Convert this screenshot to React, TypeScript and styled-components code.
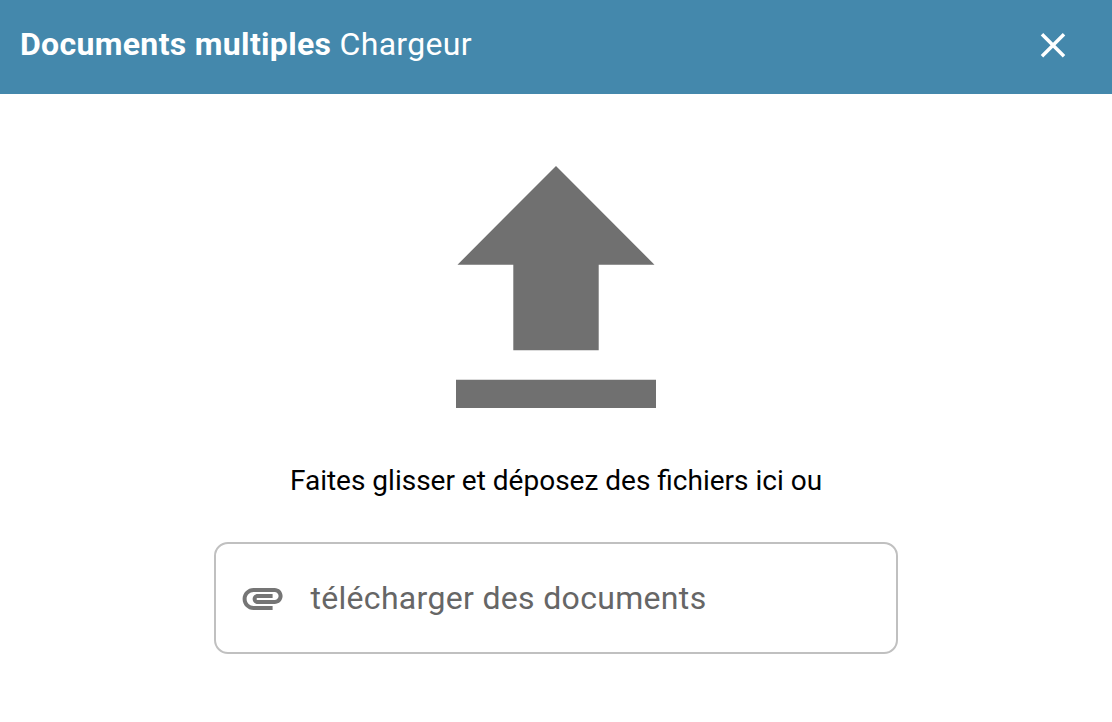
import React from "react";
import styled, { createGlobalStyle } from "styled-components";

const GlobalStyle = createGlobalStyle`
  * { box-sizing: border-box; }
  body { margin: 0; background: #fff; font-family: Roboto, sans-serif; }
`;

const Dialog = styled.div`
  height: 722px;
  overflow: hidden;
  background: #fff;
`;

const Header = styled.header`
  display: flex;
  justify-content: space-between;
  align-items: flex-start;
  height: 94px;
  padding: 24px 38px 0 20px;
  background: #4488ac;
  color: #fff;
`;

const Title = styled.h1`
  margin: 1px 0 0;
  font-size: 32px;
  line-height: 38px;
  font-weight: 400;
  letter-spacing: 0.01em;
  white-space: nowrap;
`;

const Strong = styled.b`
  font-weight: 700;
`;

const CloseButton = styled.button`
  display: flex;
  padding: 0;
  border: 0;
  background: none;
  color: inherit;
`;

const DropZone = styled.main`
  display: flex;
  flex-direction: column;
  align-items: center;
  padding-top: 72px;
`;

const Hint = styled.p`
  margin: 55px 0 0;
  font-size: 28px;
  line-height: 36px;
  color: #000;
  white-space: nowrap;
`;

const FileField = styled.label`
  display: flex;
  align-items: center;
  width: 684px;
  height: 112px;
  margin-top: 43px;
  padding-left: 22px;
  border: 2px solid #c0c0c0;
  border-radius: 14px;
`;

const FieldLabel = styled.span`
  margin-left: 24.4px;
  font-size: 32px;
  line-height: 38px;
  letter-spacing: 0.01em;
  color: #666;
  white-space: nowrap;
`;

export default function App() {
  return (
    <Dialog>
      <GlobalStyle />
      <Header>
        <Title><Strong>Documents multiples</Strong> Chargeur</Title>
        <CloseButton aria-label="Fermer">
          <svg width="42" height="42" viewBox="0 0 24 24" fill="currentColor">
            <path transform="translate(0 0.15)" d="M19 6.41 17.59 5 12 10.59 6.41 5 5 6.41 10.59 12 5 17.59 6.41 19 12 13.41 17.59 19 19 17.59 13.41 12z" />
          </svg>
        </CloseButton>
      </Header>
      <DropZone>
        <svg width="200" height="242" viewBox="0 0 200 242" fill="#707070">
          <path d="M100 0 198.500 98.700H142.700V184.200H57.300V98.700H1.500ZM0 213.700H200V242H0Z" />
        </svg>
        <Hint>Faites glisser et déposez des fichiers ici ou</Hint>
        <FileField>
          <svg width="48" height="48" viewBox="0 0 24 24" fill="#757575">
            <path transform="translate(0.3 0)" d="M2 12.500C2 9.460 4.460 7 7.500 7H18c2.210 0 4 1.790 4 4s-1.790 4-4 4H9.500C8.120 15 7 13.880 7 12.500S8.120 10 9.500 10H17v2H9.410c-.55 0-.55 1 0 1H18c1.100 0 2-.9 2-2s-.9-2-2-2H7.500C5.570 9 4 10.570 4 12.500S5.570 16 7.500 16H17v2H7.500C4.460 18 2 15.540 2 12.500z" />
          </svg>
          <FieldLabel>télécharger des documents</FieldLabel>
        </FileField>
      </DropZone>
    </Dialog>
  );
}
